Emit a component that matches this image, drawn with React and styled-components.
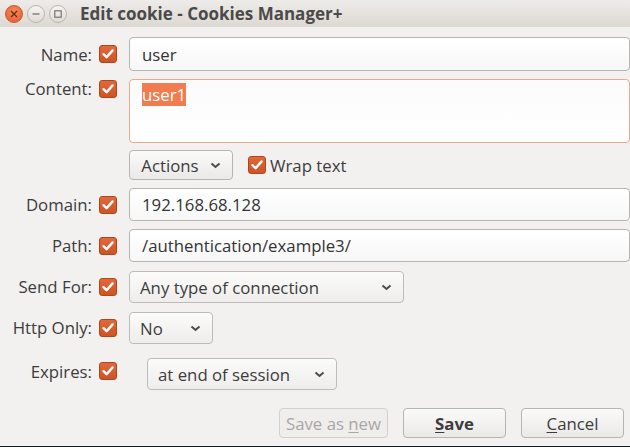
import React from "react";
import styled, { createGlobalStyle } from "styled-components";

const Global = createGlobalStyle`
  html, body { margin: 0; padding: 0; background: #f2f1f0; }
  body { font-family: "Open Sans", "Noto Sans", sans-serif; color: #3c3c3c; }
  * { box-sizing: border-box; }
`;

const Window = styled.div`
  width: 630px;
  height: 447px;
  display: flex;
  flex-direction: column;
  background: #f2f1f0;
  border-bottom: 1px solid #161a22;
  overflow: hidden;
`;

const TitleBar = styled.div`
  height: 27px;
  flex: none;
  display: flex;
  align-items: center;
  padding-left: 5px;
  gap: 4px;
  background: linear-gradient(#eeece9, #dcd8d2);
`;

const WinButton = styled.div`
  width: 18px;
  height: 18px;
  border-radius: 50%;
  display: flex;
  align-items: center;
  justify-content: center;
  background: ${(p) =>
    p.$close
      ? "radial-gradient(circle at 50% 35%, #f58a5a, #e45a2b)"
      : "linear-gradient(#f6f5f3, #dedbd6)"};
  border: 1px solid ${(p) => (p.$close ? "#c8562c" : "#b9b5af")};
`;

const Title = styled.div`
  margin-left: 9px;
  font-weight: 700;
  font-size: 17px;
  color: #4a4a4a;
`;

const Body = styled.div`
  flex: 1;
  display: flex;
  flex-direction: column;
  padding-top: 10px;
  font-size: 16.8px;
`;

const Form = styled.div`
  display: grid;
  grid-template-columns: 92px 37px 501px;
  row-gap: 8px;
`;

const Label = styled.div`
  justify-self: end;
  align-self: ${(p) => (p.$top ? "start" : "center")};
  margin-top: ${(p) => (p.$top ? "-2px" : "0")};
  color: #3c3c3c;
  white-space: nowrap;
`;

const Check = styled.div`
  width: 18px;
  height: 18px;
  border-radius: 3px;
  margin-left: ${(p) => (p.$inline ? "0" : "7px")};
  align-self: ${(p) => (p.$top ? "start" : "center")};
  margin-top: ${(p) => (p.$top ? "1px" : "0")};
  background: linear-gradient(#e0693a, #cd5424);
  border: 1px solid #b1461e;
  display: flex;
  align-items: center;
  justify-content: center;
  flex: none;
`;

const TextInput = styled.div`
  height: ${(p) => p.$h || 33}px;
  border: 1px solid #b8b5b1;
  border-radius: 4px;
  background: linear-gradient(#ffffff, #f7f7f7);
  display: flex;
  align-items: center;
  padding-left: 12px;
  color: #333;
`;

const TextArea = styled.div`
  height: 64px;
  border: 1px solid #eba88d;
  border-radius: 4px;
  background: linear-gradient(#fbfbfb, #ffffff);
  padding: 4px 12px;
  line-height: 22px;
`;

const Selected = styled.span`
  background: #f07c4f;
  color: #fff;
`;

const ControlsRow = styled.div`
  grid-column: 3;
  display: flex;
  align-items: center;
  margin-top: -1px;
`;

const Button = styled.div`
  height: 30px;
  width: ${(p) => p.$w}px;
  border: 1px solid ${(p) => (p.$disabled ? "#d3d0cc" : "#b8b5b1")};
  border-radius: 4px;
  background: ${(p) =>
    p.$disabled ? "#efeeec" : "linear-gradient(#fafaf9, #eae9e7)"};
  display: flex;
  align-items: center;
  justify-content: center;
  gap: 11px;
  font-weight: ${(p) => (p.$bold ? 700 : 400)};
  color: ${(p) => (p.$disabled ? "#a9a7a4" : "#3c3c3c")};
`;

const CheckLabel = styled.label`
  display: flex;
  align-items: center;
  gap: 4px;
  margin-left: 15px;
`;

const Select = styled.div`
  height: 32px;
  width: ${(p) => p.$w}px;
  margin-left: ${(p) => p.$ml || 0}px;
  margin-top: ${(p) => p.$mt || 0}px;
  border: 1px solid #bfbcb8;
  border-radius: 4px;
  background: linear-gradient(#fbfbfa, #eeedeb);
  display: flex;
  align-items: center;
  justify-content: space-between;
  padding: 0 11px 0 10px;
  color: #3c3c3c;
`;

const Footer = styled.div`
  display: flex;
  justify-content: flex-end;
  gap: 15px;
  padding-right: 6px;
  margin-top: 18px;
`;

const U = styled.span`
  text-decoration: underline;
  text-underline-offset: 2px;
`;

const Tick = () => (
  <svg width="14" height="14" viewBox="0 0 14 14">
    <path d="M2.5 7.2 L5.6 10.2 L11.6 3.4" fill="none" stroke="#fff" strokeWidth="2.4" strokeLinecap="round" strokeLinejoin="round" />
  </svg>
);

const Chevron = () => (
  <svg width="11" height="7" viewBox="0 0 11 7">
    <path d="M1.5 1.5 L5.5 5 L9.5 1.5" fill="none" stroke="#4a4a4a" strokeWidth="2" />
  </svg>
);

export default function App() {
  return (
    <>
      <Global />
      <Window>
        <TitleBar>
          <WinButton $close>
            <svg width="8" height="8" viewBox="0 0 8 8">
              <path d="M1 1 L7 7 M7 1 L1 7" stroke="#6b2c14" strokeWidth="1.4" />
            </svg>
          </WinButton>
          <WinButton>
            <svg width="8" height="8" viewBox="0 0 8 8">
              <path d="M0.5 4 H7.5" stroke="#6a6a6a" strokeWidth="1.2" />
            </svg>
          </WinButton>
          <WinButton>
            <svg width="8" height="8" viewBox="0 0 8 8">
              <rect x="0.8" y="0.8" width="6.4" height="6.4" fill="none" stroke="#6a6a6a" strokeWidth="1.1" />
            </svg>
          </WinButton>
          <Title>Edit cookie - Cookies Manager+</Title>
        </TitleBar>
        <Body>
          <Form>
            <Label>Name:</Label>
            <Check><Tick /></Check>
            <TextInput $h={34}>user</TextInput>

            <Label $top>Content:</Label>
            <Check $top><Tick /></Check>
            <TextArea><Selected>user1</Selected></TextArea>

            <ControlsRow>
              <Button $w={104}>Actions <Chevron /></Button>
              <CheckLabel>
                <Check $inline><Tick /></Check>
                Wrap text
              </CheckLabel>
            </ControlsRow>

            <Label>Domain:</Label>
            <Check><Tick /></Check>
            <TextInput $h={33}>192.168.68.128</TextInput>

            <Label>Path:</Label>
            <Check><Tick /></Check>
            <TextInput $h={33}>/authentication/example3/</TextInput>

            <Label>Send For:</Label>
            <Check><Tick /></Check>
            <Select $w={275} $mt={1}>Any type of connection <Chevron /></Select>

            <Label>Http Only:</Label>
            <Check><Tick /></Check>
            <Select $w={84} $mt={1}>No <Chevron /></Select>

            <Label>Expires:</Label>
            <Check><Tick /></Check>
            <Select $w={190} $ml={18} $mt={6}>at end of session <Chevron /></Select>
          </Form>
          <Footer>
            <Button $w={109} $disabled>
              <span>Save as <U>n</U>ew</span>
            </Button>
            <Button $w={103} $bold>
              <span><U>S</U>ave</span>
            </Button>
            <Button $w={103}>
              <span><U>C</U>ancel</span>
            </Button>
          </Footer>
        </Body>
      </Window>
    </>
  );
}
